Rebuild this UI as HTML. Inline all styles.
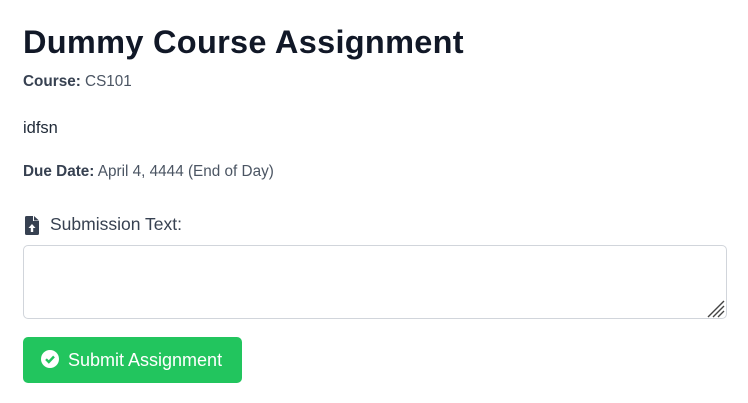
<!DOCTYPE html>
<html><head><meta charset="utf-8"><style>
body{margin:0;width:748px;height:403px;background:#fff;font-family:"Liberation Sans",sans-serif;position:relative;overflow:hidden}
.a{position:absolute;white-space:nowrap}
h1{position:absolute;left:23px;top:22px;margin:0;font-size:32.5px;font-weight:bold;color:#111827;line-height:40px;letter-spacing:0.3px}
.s{font-size:15.3px;color:#4b5563}
.s b{color:#374151}
</style></head><body>
<h1>Dummy Course Assignment</h1>
<div class="a s" style="left:23px;top:73px"><b>Course:</b> CS101</div>
<div class="a" style="left:23px;top:119px;font-size:16.5px;color:#1f2937">idfsn</div>
<div class="a s" style="left:23px;top:163px"><b>Due Date:</b> April 4, 4444 (End of Day)</div>
<svg class="a" style="left:25px;top:216px" width="14" height="19" viewBox="0 0 14 19"><path d="M0 1.5Q0 0 1.5 0H8V5H14V17.5Q14 19 12.5 19H1.5Q0 19 0 17.5Z M9 0L14 4.5H9Z" fill="#374151"/><path d="M7 8L3.5 12H5.8V16H8.2V12H10.5Z" fill="#fff"/></svg>
<div class="a" style="left:50px;top:214px;font-size:17.5px;color:#374151">Submission Text:</div>
<div class="a" style="left:23px;top:245px;width:702px;height:72px;border:1px solid #d1d5db;border-radius:5px"></div>
<svg class="a" style="left:705px;top:298px" width="20" height="20"><path d="M19 3L3 19M19 8L8 19M19 13L13 19" stroke="#444" stroke-width="1.4"/></svg>
<div class="a" style="left:23px;top:337px;width:219px;height:46px;background:#22c55e;border-radius:5px"></div>
<svg class="a" style="left:41px;top:350px" width="18" height="18" viewBox="0 0 18 18"><circle cx="9" cy="9" r="9" fill="#fff"/><path d="M5 9.2L7.8 12L13 6.5" stroke="#22c55e" stroke-width="2.4" fill="none"/></svg>
<div class="a" style="left:68px;top:350px;font-size:18px;color:#fff">Submit Assignment</div>
</body></html>
